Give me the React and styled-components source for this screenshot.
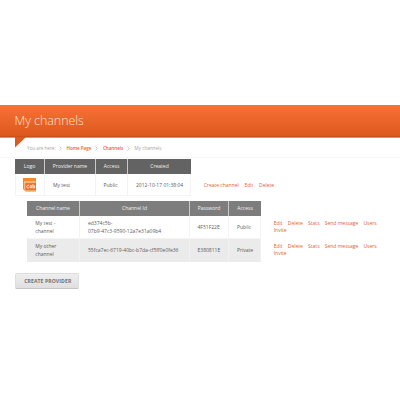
import React from "react";
import styled, { createGlobalStyle } from "styled-components";

const GlobalStyle = createGlobalStyle`
  * { box-sizing: border-box; }
  html, body { margin: 0; background: #fff; }
  body { font: 5px/7.2px "Open Sans", sans-serif; color: #5c5c5c; }
`;

const Page = styled.div`
  width: 400px;
  height: 400px;
  padding-top: 105px;
  overflow: hidden;
  background: #fff;
`;

const Header = styled.header`
  position: relative;
  height: 33px;
  padding-left: 14.5px;
  background: linear-gradient(#f77135, #dc571c);
  border-top: 1px solid #e27748;
  border-bottom: 1px solid #f08c62;
  box-shadow: inset 0 -1px 0 #c9501d;
`;

const Title = styled.h1`
  margin: 0;
  font-size: 12.4px;
  font-weight: 300;
  line-height: 30px;
  color: #ffe6d6;
`;

const Notch = styled.svg`
  position: absolute;
  left: 15px;
  top: 31px;
  display: block;
`;

const Breadcrumbs = styled.nav`
  display: flex;
  height: 20px;
  padding: 6.5px 0 0 27px;
  font-size: 4.6px;
  color: #a5a5a5;
  border-bottom: 1px solid #f7f7f7;
`;

const Crumb = styled.span`
  width: ${(p) => p.$width}px;
  white-space: nowrap;
`;

const CrumbLink = styled(Crumb)`
  color: #e5642d;
  font-weight: 600;
  letter-spacing: -0.04px;
`;

const Chevron = styled.svg`
  flex: none;
  width: 3px;
  height: 5px;
  margin: 1.5px 5px 0 0;
`;

const Section = styled.section`
  display: flex;
  margin: ${(p) => p.$margin};
`;

const Table = styled.div`
  flex: none;
  display: grid;
  grid-template-columns: ${(p) => p.$columns};
  grid-template-rows: ${(p) => p.$rows};
`;

const HeadCell = styled.div`
  display: flex;
  align-items: center;
  justify-content: center;
  background: ${(p) => p.$color};
  color: #f1f1f1;
  white-space: nowrap;
  border-right: 1px solid #c9c9c9;
  &:last-child, &[data-last] { border-right: 0; }
`;

const Cell = styled.div`
  display: flex;
  align-items: center;
  padding-left: ${(p) => p.$pad}px;
  padding-top: ${(p) => p.$top || 0}px;
  background: ${(p) => (p.$shaded ? "#ebebeb" : "#fff")};
  border-right: 1px solid ${(p) => (p.$shaded ? "#f1f1f1" : "#f4f4f4")};
  border-bottom: 1px solid ${(p) => (p.$shaded ? "#ebebeb" : "#f4f4f4")};
  white-space: pre;
`;

const LogoCell = styled(Cell)`
  border-left: 1px solid #f4f4f4;
`;

const Actions = styled.div`
  display: flex;
  height: 7.2px;
  gap: 5.2px;
  color: #e2622f;
  white-space: nowrap;
`;

const ProviderActions = styled(Actions)`
  gap: 5.7px;
  margin: 22.5px 0 0 12.7px;
`;

const ActionColumn = styled.div`
  display: flex;
  flex-direction: column;
  height: 61px;
  padding: 19px 0 0 12.7px;
`;

const ActionGroup = styled.div`
  flex: none;
  height: 22.5px;
`;

const CreateButton = styled.button`
  display: block;
  width: 64px;
  height: 16px;
  margin: 11px 0 0 15px;
  padding: 0 0 0 1.5px;
  border: 1px solid #dedede;
  border-bottom-color: #c4c4c4;
  border-radius: 1.5px;
  background: linear-gradient(#eeeeee, #dfdfdf);
  color: #707070;
  font: 700 5.1px/14px "Open Sans", sans-serif;
  letter-spacing: 0.1px;
`;

function Separator() {
  return (
    <Chevron viewBox="0 0 3 5">
      <path d="M.5.5 2.3 2.5.5 4.5" fill="none" stroke="#b5b5b5" strokeWidth=".7" />
    </Chevron>
  );
}

function ProviderLogo() {
  return (
    <svg width="13" height="14" viewBox="0 0 13 14">
      <path d="M0 0h13v13.5H2.5L0 11z" fill="#f08a2c" />
      <path d="M1 3.5h11.5v1H1z" fill="#ffe2c4" />
      <path d="M1.5 4v7.2l1.5 1.3" fill="none" stroke="#fbbd88" strokeWidth=".9" />
      <path d="M3 5.2h10v7H3z" fill="#f36f25" />
      <path
        d="M6.2 7.3c-1.9-.4-2.5.5-2.5 1.4s.9 1.5 2.5 1.1M7.1 9.8V7.7h1.5v2.1H7.1M9.9 6.2v3.7h1.8V7.8H9.9"
        fill="none"
        stroke="#fff0e2"
        strokeWidth=".9"
      />
      <path d="M3 12.9h10" stroke="#fbc490" strokeWidth=".9" />
    </svg>
  );
}

const channels = [
  { name: "My test -\nchannel", id: "ed374c5b-\n07b9-47c3-9590-12a7e31a09b4", password: "4F51F22E", access: "Public" },
  { name: "My other\nchannel", id: "55fca7ec-6719-40bc-b7da-cf5ff0e0fe36", password: "E380811E", access: "Private", shaded: true },
];

export default function App() {
  return (
    <Page>
      <GlobalStyle />
      <Header>
        <Title>My channels</Title>
        <Notch width="11" height="11" viewBox="0 0 11 11">
          <path d="M0 0h11L0 10.5z" fill="#dc591f" />
        </Notch>
      </Header>
      <Breadcrumbs>
        <Crumb $width={31.5}>You are here:</Crumb>
        <Separator />
        <CrumbLink $width={28.5}>Home Page</CrumbLink>
        <Separator />
        <CrumbLink $width={23.6}>Channels</CrumbLink>
        <Separator />
        <Crumb $width={30}>My channels</Crumb>
      </Breadcrumbs>

      <Section $margin="1px 0 0 15px">
        <Table $columns="30px 51px 32px 63px" $rows="15px 22px">
          <HeadCell $color="#636363">Logo</HeadCell>
          <HeadCell $color="#636363">Provider name</HeadCell>
          <HeadCell $color="#636363">Access</HeadCell>
          <HeadCell $color="#636363" data-last>Created</HeadCell>
          <LogoCell $pad={7} $top={1}><ProviderLogo /></LogoCell>
          <Cell $pad={8} $top={2}>My test</Cell>
          <Cell $pad={7.5} $top={2}>Public</Cell>
          <Cell $pad={8} $top={2}>2012-10-17 01:38:04</Cell>
        </Table>
        <ProviderActions>
          <span>Create channel</span>
          <span>Edit</span>
          <span>Delete</span>
        </ProviderActions>
      </Section>

      <Section $margin="5px 0 0 27px">
        <Table $columns="53px 110px 39px 32px" $rows="15px 22.5px 23.5px">
          <HeadCell $color="#7d7d7d">Channel name</HeadCell>
          <HeadCell $color="#7d7d7d">Channel Id</HeadCell>
          <HeadCell $color="#7d7d7d">Password</HeadCell>
          <HeadCell $color="#7d7d7d" data-last>Access</HeadCell>
          {channels.map((c) => (
            <React.Fragment key={c.id}>
              <Cell $pad={8.3} $top={1.5} $shaded={c.shaded}>{c.name}</Cell>
              <Cell $pad={8} $top={1.5} $shaded={c.shaded}>{c.id}</Cell>
              <Cell $pad={7.5} $top={1.5} $shaded={c.shaded}>{c.password}</Cell>
              <Cell $pad={8} $top={1.5} $shaded={c.shaded}>{c.access}</Cell>
            </React.Fragment>
          ))}
        </Table>
        <ActionColumn>
          {channels.map((c) => (
            <ActionGroup key={c.id}>
              <Actions>
                <span>Edit</span>
                <span>Delete</span>
                <span>Stats</span>
                <span>Send message</span>
                <span>Users</span>
              </Actions>
              <Actions>
                <span>Invite</span>
              </Actions>
            </ActionGroup>
          ))}
        </ActionColumn>
      </Section>

      <CreateButton>CREATE PROVIDER</CreateButton>
    </Page>
  );
}
